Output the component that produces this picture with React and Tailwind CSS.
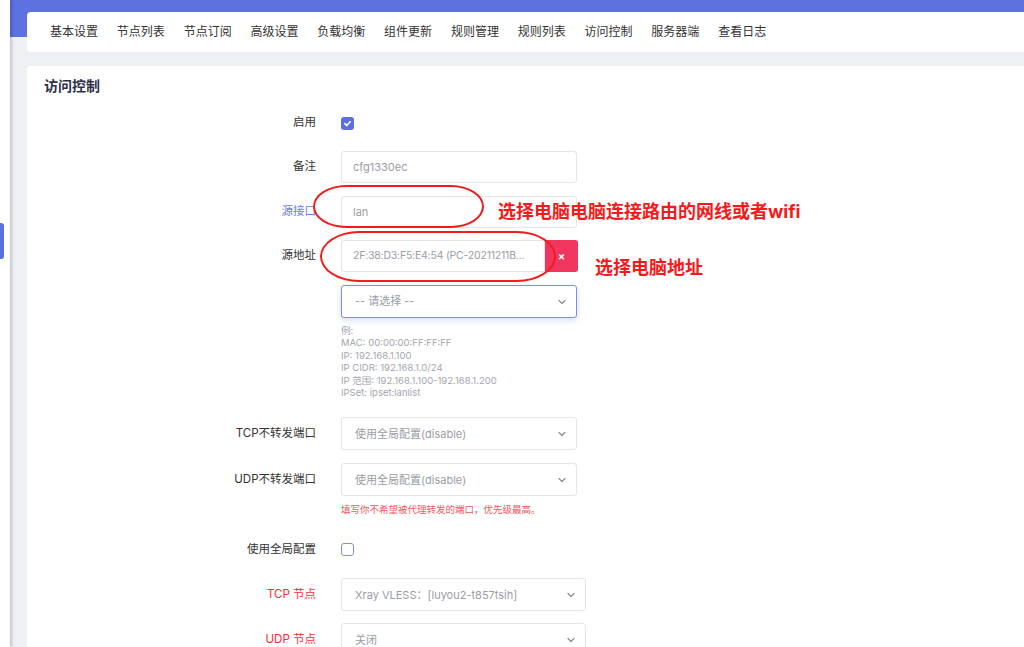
import React from "react";

const tabs = ["基本设置", "节点列表", "节点订阅", "高级设置", "负载均衡", "组件更新", "规则管理", "规则列表", "访问控制", "服务器端", "查看日志"];

const Chevron = () => (
  <svg width="10" height="10" viewBox="0 0 10 10" className="text-[#8a8d96]">
    <path d="M2 3.5 L5 6.5 L8 3.5" fill="none" stroke="currentColor" strokeWidth="1.2" strokeLinecap="round" strokeLinejoin="round" />
  </svg>
);

const Row = ({ label, labelClass = "text-[#333]", className = "", children }) => (
  <div className={`flex items-center ${className}`}>
    <div className={`w-[289px] text-right text-[11.5px] ${labelClass}`}>{label}</div>
    <div className="ml-[25px] flex items-center">{children}</div>
  </div>
);

const Input = ({ value, w = "w-[236px]" }) => (
  <div className={`${w} h-[32px] border border-[#e3e5ea] rounded-[3px] bg-white px-[11px] flex items-center text-[11px] text-[#9b9da6]`}>
    {value}
  </div>
);

const Select = ({ value, w = "w-[236px]", focused = false }) => (
  <div
    className={`${w} h-[33px] rounded-[3px] bg-white pl-[13px] pr-[9px] flex items-center justify-between text-[11px] text-[#9b9da6] border ${
      focused ? "border-[#7d8ee9] shadow-[0_2px_6px_rgba(93,114,224,0.25)]" : "border-[#e3e5ea]"
    }`}
  >
    <span>{value}</span>
    <Chevron />
  </div>
);

export default function App() {
  return (
    <div
      className="w-[1024px] h-[647px] overflow-hidden flex bg-[#eef0f3]"
      style={{ fontFamily: '"Inter", "Noto Sans CJK SC", sans-serif' }}
    >
      {/* sidebar edge */}
      <div className="relative w-[10px] shrink-0 bg-white shadow-[2px_0_3px_rgba(0,0,0,0.18)] z-10">
        <div className="absolute left-0 top-[223px] w-[4px] h-[36px] rounded-r-[3px] bg-[#5b6fe0]" />
      </div>

      <div className="flex-1 pt-[12px] pl-[17px] bg-[linear-gradient(#5d72e0_37px,#eef0f3_37px)]">
        {/* tabs */}
        <div className="h-[40px] -mr-[10px] bg-white rounded-[4px] flex items-center pl-[23px] gap-[18.8px] text-[12px] text-[#333]">
          {tabs.map((t) => (
            <span key={t} className="whitespace-nowrap">{t}</span>
          ))}
        </div>

        {/* content */}
        <div className="relative mt-[14px] -mr-[10px] h-[700px] bg-white rounded-[4px] pt-[10px]">
          <div className="pl-[17px] h-[20px] leading-[20px] text-[14px] font-bold text-[#2d3148]">访问控制</div>

          <Row label="启用" className="mt-[11px] h-[32px]">
            <div className="w-[13px] h-[13px] rounded-[3px] bg-[#5b6fe0] flex items-center justify-center">
              <svg width="9" height="9" viewBox="0 0 10 10">
                <path d="M2 5.2 L4.2 7.3 L8 3" fill="none" stroke="#fff" strokeWidth="1.8" strokeLinecap="round" strokeLinejoin="round" />
              </svg>
            </div>
          </Row>

          <Row label="备注" className="mt-[12px]">
            <Input value="cfg1330ec" />
          </Row>

          <Row label="源接口" labelClass="text-[#6b7de6]" className="mt-[13px]">
            <Input value="lan" />
          </Row>

          <Row label="源地址" className="mt-[12px]">
            <div className="flex">
              <div className="w-[204px] h-[32px] border border-[#e3e5ea] rounded-l-[3px] bg-white pl-[11px] flex items-center text-[10.5px] tracking-[-0.2px] text-[#9b9da6] whitespace-nowrap">
                2F:38:D3:F5:E4:54 (PC-20211211B...
              </div>
              <div className="w-[33px] h-[32px] rounded-r-[3px] bg-[#f0365e] flex items-center justify-center text-white text-[11px] font-bold">
                ×
              </div>
            </div>
          </Row>

          <Row label="" className="mt-[13px]">
            <Select value="-- 请选择 --" focused />
          </Row>

          <div className="ml-[314px] mt-[7px] text-[9.5px] leading-[12.4px] text-[#a3a6af]">
            <div>例:</div>
            <div>MAC: 00:00:00:FF:FF:FF</div>
            <div>IP: 192.168.1.100</div>
            <div>IP CIDR: 192.168.1.0/24</div>
            <div>IP 范围: 192.168.1.100-192.168.1.200</div>
            <div>IPSet: ipset:lanlist</div>
          </div>

          <Row label="TCP不转发端口" className="mt-[18px]">
            <Select value="使用全局配置(disable)" />
          </Row>

          <Row label="UDP不转发端口" className="mt-[13px]">
            <Select value="使用全局配置(disable)" />
          </Row>

          <div className="ml-[314px] mt-[8px] text-[9.5px] leading-[12px] text-[#f2555e]">
            填写你不希望被代理转发的端口，优先级最高。
          </div>

          <Row label="使用全局配置" className="mt-[17px] h-[32px]">
            <div className="w-[13px] h-[13px] rounded-[3px] border-[1.5px] border-[#7d8ee9] bg-white" />
          </Row>

          <Row label="TCP 节点" labelClass="text-[#ff2a35]" className="mt-[13px]">
            <Select value="Xray VLESS：[luyou2-t857tsih]" w="w-[245px]" />
          </Row>

          <Row label="UDP 节点" labelClass="text-[#ff2a35]" className="mt-[12px]">
            <Select value="关闭" w="w-[245px]" />
          </Row>

          {/* annotations */}
          <div className="absolute left-[286px] top-[119px] w-[171px] h-[43px] rounded-[34px/22px] border-2 border-[#f01c1c]" />
          <div className="absolute left-[293px] top-[165px] w-[236px] h-[51px] rounded-[40px/26px] border-2 border-[#f01c1c]" />
          <div className="absolute left-[471px] top-[134px] text-[18px] leading-[24px] font-bold text-[#f5191b] whitespace-nowrap">
            选择电脑电脑连接路由的网线或者wifi
          </div>
          <div className="absolute left-[568px] top-[190px] text-[18px] leading-[24px] font-bold text-[#f5191b] whitespace-nowrap">
            选择电脑地址
          </div>
        </div>
      </div>
    </div>
  );
}
